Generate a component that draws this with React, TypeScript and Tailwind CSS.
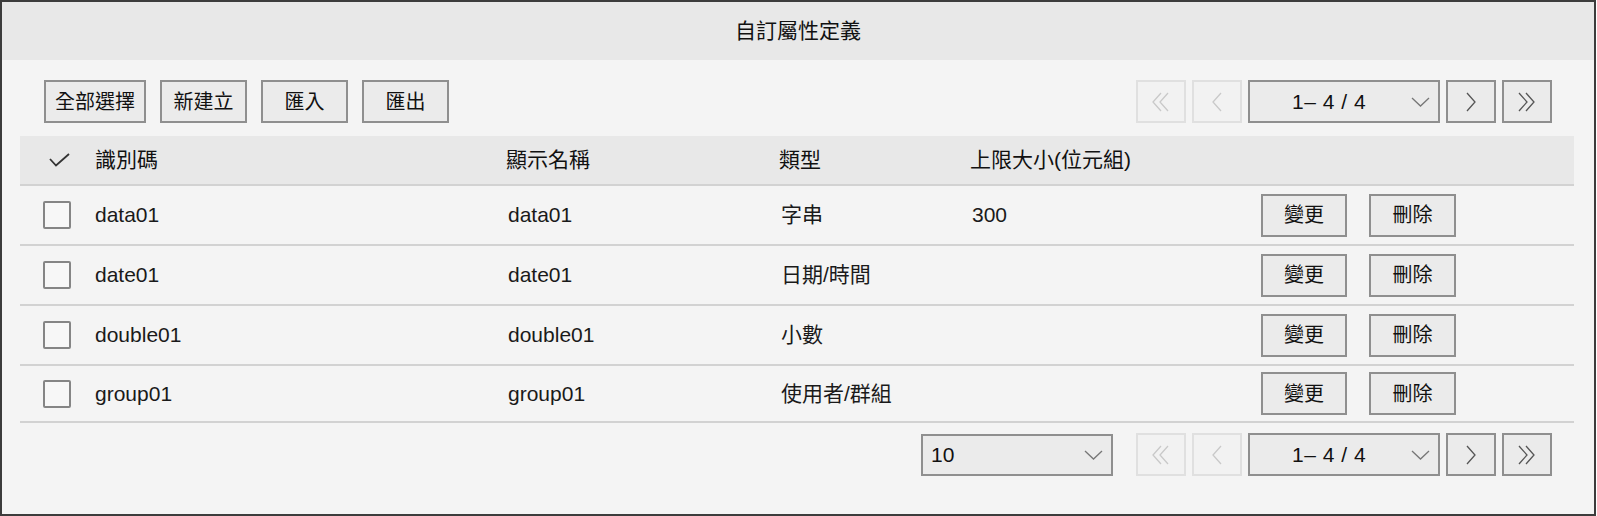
import type { ReactNode } from 'react';

type Attr = {
    id: string;
    name: string;
    type: string;
    max?: string;
};

const attrs: Attr[] = [
    { id: 'data01', name: 'data01', type: '字串', max: '300' },
    { id: 'date01', name: 'date01', type: '日期/時間' },
    { id: 'double01', name: 'double01', type: '小數' },
    { id: 'group01', name: 'group01', type: '使用者/群組' },
];

function Btn({ children, className = '' }: { children: ReactNode; className?: string }) {
    return (
        <button
            type="button"
            className={`flex h-[43px] items-center justify-center border-2 border-[#8f8f8f] bg-[#ebebeb] text-[20px] text-[#111] ${className}`}
        >
            {children}
        </button>
    );
}

function Arrow({ dir, double, disabled }: { dir: 'l' | 'r'; double?: boolean; disabled?: boolean }) {
    const color = disabled ? '#c9c9c9' : '#555';
    const single = dir === 'l' ? '9,1 1,10 9,19' : '1,1 9,10 1,19';
    const second = dir === 'l' ? '16,1 8,10 16,19' : '8,1 16,10 8,19';
    return (
        <button
            type="button"
            className={`flex h-[43px] w-[50px] items-center justify-center border-2 ${
                disabled ? 'border-[#e0e0e0] bg-[#f2f2f2]' : 'border-[#8f8f8f] bg-[#ebebeb]'
            }`}
        >
            <svg width={double ? 18 : 11} height="20" viewBox={double ? '0 0 18 20' : '0 0 11 20'} fill="none">
                <polyline points={single} stroke={color} strokeWidth="1.3" />
                {double && <polyline points={second} stroke={color} strokeWidth="1.3" />}
            </svg>
        </button>
    );
}

function Chevron() {
    return (
        <svg width="19" height="10" viewBox="0 0 19 10" fill="none">
            <polyline points="1,1 9.5,9 18,1" stroke="#777" strokeWidth="1.3" />
        </svg>
    );
}

function Pager() {
    return (
        <div className="flex items-center gap-[6px]">
            <Arrow dir="l" double disabled />
            <Arrow dir="l" disabled />
            <div className="flex h-[43px] w-[192px] items-center border-2 border-[#8f8f8f] bg-[#ebebeb] pl-[42px] pr-[8px]">
                <span className="flex-1 text-[21px] tracking-[0.5px] text-[#111]">1– 4 / 4</span>
                <Chevron />
            </div>
            <Arrow dir="r" />
            <Arrow dir="r" double />
        </div>
    );
}

export default function App() {
    return (
        <div
            className="h-[516px] w-[1597px] bg-white"
            style={{ fontFamily: '"Liberation Sans", "Noto Sans CJK TC", sans-serif' }}
        >
            <div className="flex h-[516px] w-[1596px] flex-col border-2 border-[#3c3c3c] bg-[#f4f4f4]">
                <div className="flex h-[58px] items-center justify-center bg-[#e8e8e8] text-[21px] text-[#111]">
                    自訂屬性定義
                </div>

                <div className="flex flex-col pl-[18px] pr-[20px]">
                    <div className="mt-[20px] flex items-center justify-between pl-[24px] pr-[22px]">
                        <div className="flex gap-[14px]">
                            <Btn className="w-[102px]">全部選擇</Btn>
                            <Btn className="w-[87px]">新建立</Btn>
                            <Btn className="w-[87px]">匯入</Btn>
                            <Btn className="w-[87px]">匯出</Btn>
                        </div>
                        <Pager />
                    </div>

                    <div className="mt-[13px] flex h-[50px] items-center border-b-2 border-[#d2d2d2] bg-[#e8e8e8] text-[21px] text-[#111]">
                        <div className="flex w-[75px] justify-center pl-[4px]">
                            <svg width="21" height="14" viewBox="0 0 21 14" fill="none">
                                <polyline points="1,6 7,12.5 20,1" stroke="#333" strokeWidth="1.8" />
                            </svg>
                        </div>
                        <div className="w-[411px]">識別碼</div>
                        <div className="w-[273px]">顯示名稱</div>
                        <div className="w-[191px]">類型</div>
                        <div>上限大小(位元組)</div>
                    </div>

                    {attrs.map((a, i) => (
                        <div
                            key={a.id}
                            className={`flex items-center border-b-2 border-[#d2d2d2] text-[21px] text-[#1a1a1a] ${
                                i === attrs.length - 1 ? 'h-[57px]' : 'h-[60px]'
                            }`}
                        >
                            <div className="flex w-[75px] justify-center pr-[1px]">
                                <div className="h-[28px] w-[28px] rounded-[2px] border-2 border-[#858585] bg-[#f7f7f7]" />
                            </div>
                            <div className="w-[413px]">{a.id}</div>
                            <div className="w-[273px]">{a.name}</div>
                            <div className="w-[191px]">{a.type}</div>
                            <div className="w-[289px]">{a.max}</div>
                            <div className="flex gap-[22px]">
                                <Btn className="w-[86px]">變更</Btn>
                                <Btn className="w-[87px]">刪除</Btn>
                            </div>
                        </div>
                    ))}

                    <div className="mt-[10px] flex items-center justify-end gap-[23px] pr-[22px]">
                        <div className="flex h-[42px] w-[192px] items-center border-2 border-[#8f8f8f] bg-[#ebebeb] pl-[8px] pr-[8px]">
                            <span className="flex-1 text-[21px] text-[#111]">10</span>
                            <Chevron />
                        </div>
                        <Pager />
                    </div>
                </div>
            </div>
        </div>
    );
}
